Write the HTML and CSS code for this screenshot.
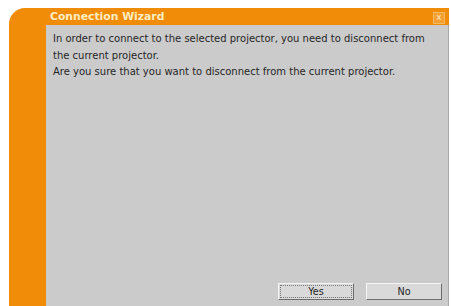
FILE: index.html
```html
<!DOCTYPE html>
<html>
<head>
<meta charset="utf-8">
<link rel="stylesheet" href="styles.css">
</head>
<body>
<div class="frame">
  <div class="titlebar">
    <span class="title">Connection Wizard</span>
    <span class="close">x</span>
  </div>
  <div class="panel">
    <div class="message">
      <p>In order to connect to the selected projector, you need to disconnect from the current projector.</p>
      <p>Are you sure that you want to disconnect from the current projector.</p>
    </div>
    <div class="buttons">
      <button class="btn focused"><span>Yes</span></button>
      <button class="btn"><span>No</span></button>
    </div>
  </div>
</div>
</body>
</html>
```
FILE: styles.css
```css
html, body {
  margin: 0;
  padding: 0;
  background: #ffffff;
  width: 451px;
  height: 306px;
  overflow: hidden;
}
.frame {
  margin: 8px 2px 0 9px;
  height: 298px;
  background: #f08c08;
  border-top-left-radius: 16px;
  display: flex;
  flex-direction: column;
  box-sizing: border-box;
}
.titlebar {
  height: 17px;
  display: flex;
  align-items: center;
  justify-content: space-between;
  padding: 0 4px 0 41px;
}
.title {
  font-family: "DejaVu Sans", sans-serif;
  font-weight: bold;
  font-size: 10.8px;
  color: #ffedc0;
}
.close {
  width: 10px;
  height: 10px;
  border: 1px solid #f6b860;
  background: #f3a030;
  color: #ffe8c8;
  font-family: "DejaVu Sans", sans-serif;
  font-size: 9px;
  line-height: 9px;
  text-align: center;
  margin-top: 2px;
}
.panel {
  flex: 1;
  margin-left: 37px;
  background: #cbcbcb;
  border-right: 1px solid #a8a8a8;
  display: flex;
  flex-direction: column;
  justify-content: space-between;
  padding: 0 0 6px 7px;
}
.message {
  font-family: "DejaVu Sans", sans-serif;
  font-size: 10px;
  color: #262626;
  line-height: 16.5px;
  padding-top: 6px;
  padding-right: 10px;
}
.message p {
  margin: 0;
}
.buttons {
  display: flex;
  justify-content: flex-end;
  gap: 12px;
  padding-right: 6px;
}
.btn {
  width: 76px;
  height: 17px;
  padding: 1px;
  margin: 0;
  background: #d9d9d9;
  border: 1px solid;
  border-color: #f4f4f4 #6e6e6e #6e6e6e #f4f4f4;
  font-family: "DejaVu Sans", sans-serif;
  font-size: 9.6px;
  color: #222;
  display: flex;
}
.btn span {
  flex: 1;
  display: flex;
  align-items: center;
  justify-content: center;
  border: 1px dotted transparent;
}
.btn.focused span {
  border-color: #777;
}
```
